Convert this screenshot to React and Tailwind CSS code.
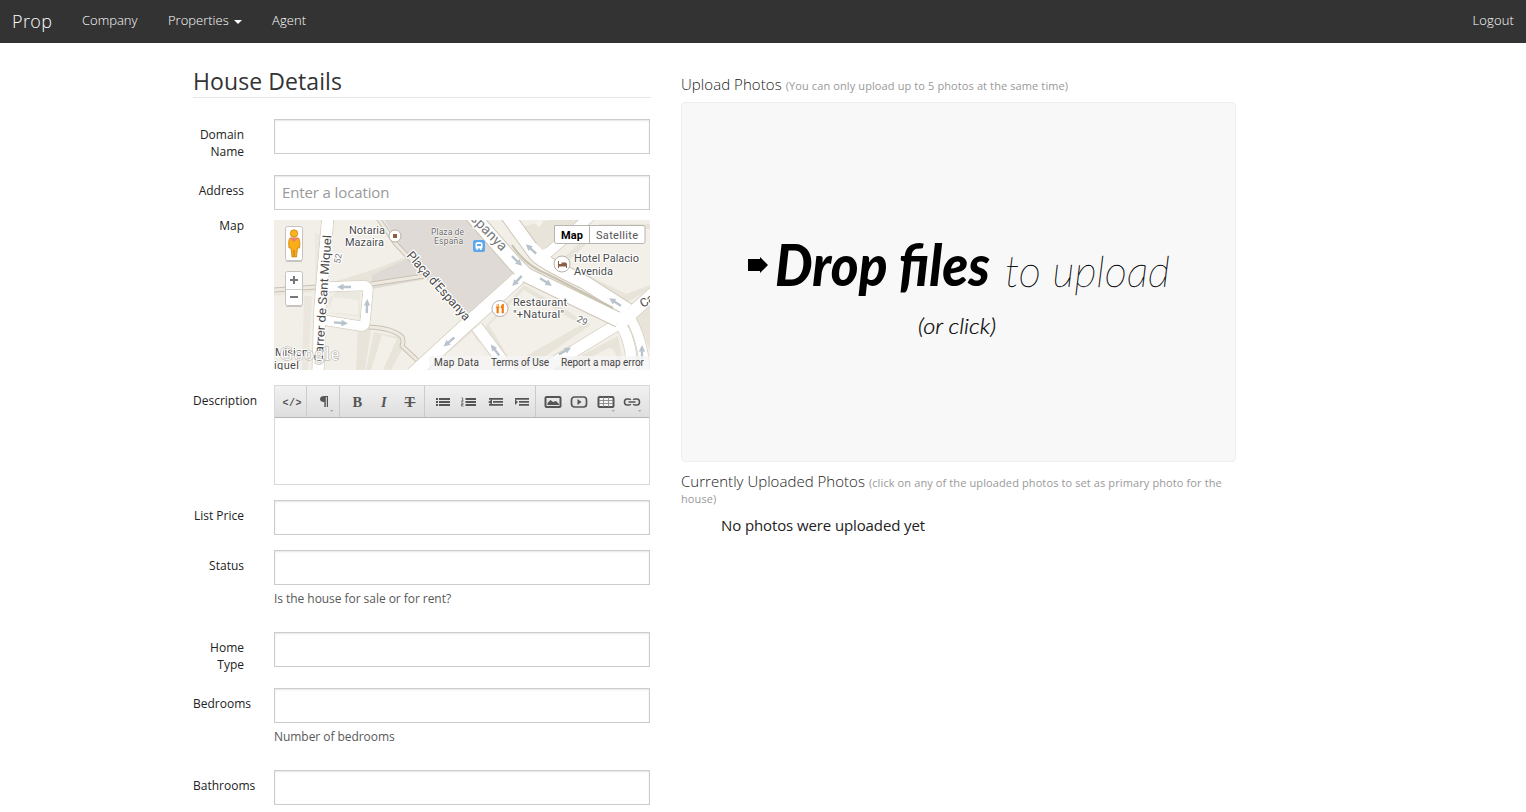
import React from "react";

const MAP_ARROWS = [
  [70, 67, 180], [67, 103, 5], [93, 86, -88], [175, 122, 140],
  [257, 29, 222], [243, 41, 44], [243, 61, 133], [272, 62, 32],
  [341, 82, 212], [221, 130, 232], [291, 131, -30], [368, 132, -90],
];

function Road({ d, w, casing = "#d9d4c6" }) {
  return (
    <>
      <path d={d} stroke={casing} strokeWidth={w + 2} />
      <path d={d} stroke="#fff" strokeWidth={w} />
    </>
  );
}

function MapDrawing() {
  const roads = [
    ["M54 -4 L46 88 L44 154", 11],
    ["M51 67 L90 65.500 Q94 65.500 94 70 L91 102 Q91 107 86 106 L49 100", 9],
    ["M318 -5 L268 38", 9],
    ["M249 54 L190 107 L139 154", 13],
    ["M203 107 L238 154", 11],
    ["M349 101 L300 131 L260 154", 11],
    ["M349 101 L380 73", 12],
    ["M340 98 Q358 112 358 154", 10],
    ["M354 94 Q370 120 371 154", 9],
  ];
  return (
    <svg viewBox="0 0 376 150" className="block h-[150px] w-[376px]" fontFamily="Roboto, sans-serif">
      <rect width="376" height="150" fill="#f2efe9" />
      <g fill="#e8e4da">
        <path d="M60 62 L98 50 L132 37 L137 42 L98 64 Z" />
        <path d="M41 13 H46 V70 H41 Z" opacity=".6" />
        <path d="M54 80 L62 72 H86 V97 L57 93 Z" fill="#ebe8df" />
        <path d="M0 70 L40 65 V72 L0 76 Z M30 76 H38 L34 150 H28 Z" opacity=".7" />
        <path d="M84 108 L97 110 L91 150 H82 Z M100 112 L125 117 L129 127 L117 150 H92 Z" />
        <path d="M143 150 L198 101 L208 116 L190 150 Z M211 107 L250 65 L317 105 L270 137 L242 150 Z" />
        <path d="M275 0 L310 0 L269 30 L247 7 Z M282 45 L326 4 H376 V69 L352 83 Z" />
        <path d="M280 150 L344 116 L350 150 Z M376 85 L361 98 L376 130 Z" />
      </g>
      <g fill="#f3f0ea">
        <path d="M59 77 L84 80 V95 L55 92 Z M108 115 L123 119 L109 150 H97 Z" />
        <path d="M153 150 L198 112 L220 150 Z" />
        <path d="M215 105 L250 70 L307 105 L261 131 L239 145 Z M291 44 L328 9 H376 V65 L352 74 Z" />
        <path d="M293 150 L335 128 Q344 129 344 150 Z" />
      </g>
      <path d="M110 0 L134 38 L98 55 L98 69 L152 59 L197 97 L246 53 L201 0 Z" fill="#dfdad5" />
      <g fill="none" strokeLinejoin="round">
        <path d="M0 70 L42 67 M97 64 L150 56 M104 -2 L122 24 L140 43 M94 107 Q119 108 128 117 Q130 121 128 126 L143 140" stroke="#c9c2b3" strokeWidth="5" />
        <path d="M0 70 L42 67 M97 64 L150 56 M104 -2 L122 24 L140 43 M94 107 Q119 108 128 117 Q130 121 128 126 L143 140" stroke="#eeeae1" strokeWidth="3" />
        {roads.map(([d, w]) => <Road key={d} d={d} w={w} />)}
        {roads.map(([d, w]) => <path key={d} d={d} stroke="#fff" strokeWidth={w} />)}
        <Road d="M233 -5 L262 35 Q270 43 310 62 L354 90" w={13} casing="#cec8b7" />
        <Road d="M198 -5 L240 43 L252 55 L345 100" w={14} casing="#cec8b7" />
        <path d="M238 25 Q252 46 273 54 L339 88" stroke="#c9c2b0" strokeWidth="2.200" />
        <path d="M249 54 L239 63 M343 103 L352 94 M346 100 L356 91 M258 27 L267 37 L275 33" stroke="#fff" strokeWidth="11" />
      </g>
      {MAP_ARROWS.map(([x, y, a]) => (
        <path key={`${x}-${y}`} transform={`translate(${x} ${y}) rotate(${a})`} d="M-7 -1.200 H.5 V-3.200 L7 0 L.5 3.200 V1.200 H-7 Z" fill="#b9c3cc" />
      ))}
      <path d="m265 -1 4 4-4 4-4-4z" fill="#f4f2ec" />
      <g fill="#4a4a4a" stroke="#fff" strokeWidth="2.500" strokeLinejoin="round" paintOrder="stroke" fontSize="11">
        <text transform="translate(48.500 142) rotate(-86)" fontSize="12" textLength="127" lengthAdjust="spacingAndGlyphs">Carrer de Sant Miquel</text>
        <text transform="translate(66 44) rotate(-80)" fontSize="9" fill="#777">52</text>
        <text transform="translate(132 36) rotate(48)" fontSize="12.500" textLength="88" lengthAdjust="spacingAndGlyphs">Plaça d'Espanya</text>
        <text transform="translate(190 -7) rotate(46)" fontSize="14" fill="#777" textLength="54">Espanya</text>
        <text transform="translate(302 101) rotate(27)" fontSize="9.500" fill="#666">29</text>
        <text transform="translate(369 88) rotate(-32)" fontSize="12">Ca</text>
        <g strokeWidth="2">
          <text x="75" y="14" textLength="36">Notaria</text>
          <text x="71" y="26" textLength="39">Mazaira</text>
          <text x="157" y="15" fontSize="8.500" textLength="33" fill="#666" strokeWidth="1">Plaza de</text>
          <text x="160" y="24" fontSize="8.500" textLength="29" fill="#666" strokeWidth="1">España</text>
          <text x="300" y="42" textLength="65">Hotel Palacio</text>
          <text x="300" y="55" textLength="39">Avenida</text>
          <text x="239" y="86" textLength="54">Restaurant</text>
          <text x="239" y="98" textLength="51">"+Natural"</text>
          <text x="1" y="136" textLength="33">Mision</text>
          <text x="0" y="149" textLength="25">iquel</text>
        </g>
      </g>
      <g fill="#fff" stroke="#b6b1a9">
        <circle cx="121" cy="16" r="6" /><circle cx="288" cy="44" r="8" /><circle cx="226" cy="88.500" r="8" />
      </g>
      <rect x="119" y="14" width="4" height="4" fill="#8b6045" />
      <path d="M284 41h1v3h2.500v-1.500H292l1 1.500v4h-1v-1.500h-7V48h-1z" fill="#8b6045" />
      <path d="M223 84v3.500M224.500 84v3.500M222.200 87h3l-.8 1.500V93h-1.500v-4.500zM229 84q-2 1-2 4h1v5h1.500v-9z" stroke="#f27b0c" strokeWidth=".7" fill="#f27b0c" />
      <g>
        <rect x="199" y="20" width="12" height="12" rx="2" fill="#5ba7ee" />
        <path d="M201.500 23.500q0-1.500 3.500-1.500t3.500 1.500v5h-1v1.500H206v-1.500h-2V30h-1.500v-1.500h-1z" fill="#fff" />
        <path d="M203 24h4v2h-4z" fill="#5ba7ee" />
      </g>
      <g>
        <rect x="11.500" y="6.500" width="17" height="34" rx="2" fill="#fff" stroke="#c6c3be" />
        <path d="M12 41.500h16" stroke="#aaa" opacity=".6" />
        <path d="M16 18q-2 2-1 10h2l1 9h1.800l.2-7 .5 7h2l1-9h2q1-8-1-10z" fill="#f9ae15" stroke="#c8820c" strokeWidth=".8" />
        <circle cx="20" cy="13.500" r="3.700" fill="#f9b51f" stroke="#c8820c" strokeWidth=".8" />
        <path d="M16 18h8l-4 4z" fill="#f5787b" />
        <rect x="11.500" y="51.500" width="17" height="34" rx="2" fill="#fff" stroke="#c6c3be" />
        <path d="M12 86.500h16" stroke="#aaa" opacity=".6" />
        <path d="M12 69.500h16" stroke="#d2d0cc" />
        <path d="M16 60h8M20 56v8M16 77h8" stroke="#777" strokeWidth="2" />
      </g>
      <text x="6" y="140" fontSize="18" fontFamily="Liberation Serif, serif" fill="#fff" stroke="#b5b2ac" strokeWidth="1.200" paintOrder="stroke" textLength="59">Google</text>
      <rect x="155" y="136" width="221" height="14" fill="#f5f5f5" opacity=".78" />
      <g fill="#444" fontSize="10">
        <text x="160" y="146" textLength="45">Map Data</text>
        <text x="217" y="146" textLength="58">Terms of Use</text>
        <text x="287" y="146" textLength="83">Report a map error</text>
      </g>
      <path d="M280.500 5.500H369q2 0 2 2V21.500q0 2-2 2h-86.500q-2 0-2-2z" fill="#fff" stroke="#b8b5b1" />
      <path d="M315.500 5v19" stroke="#b8b5b1" />
      <text x="287" y="19" fontSize="11" fontWeight="700" fill="#000" textLength="22">Map</text>
      <text x="322" y="19" fontSize="11" fill="#565656" textLength="42">Satellite</text>
    </svg>
  );
}

const ICONS = {
  code: <text x="2.500" y="14" fontSize="10" fontWeight="700" fontFamily="Liberation Mono, monospace" textLength="19">&lt;/&gt;</text>,
  para: <><path d="M12.500 4H16v11h-1.200V5h-1v10h-1.500v-5Q8 10 8 7t4.500-3z" /><path d="M18 18h3.500l-1.750 2z" fill="#aaa" /></>,
  bold: <text x="7.500" y="15" fontSize="14.500" fontWeight="700" fontFamily="Liberation Serif, serif">B</text>,
  italic: <text x="10" y="15" fontSize="14.500" fontWeight="700" fontStyle="italic" fontFamily="Liberation Serif, serif">I</text>,
  strike: <><text x="7" y="15" fontSize="14.500" fontWeight="700" fontFamily="Liberation Serif, serif">T</text><path d="M6.500 10h11v1.200h-11z" /></>,
  ul: <><path d="M5 6h2v2H5zM5 9h2v2H5zM5 12h2v2H5z" /><path d="M8 6h11v2H8zM8 9h11v2H8zM8 12h11v2H8z" /></>,
  ol: <><path d="M8.500 6H19v2H8.500zM8.500 9H19v2H8.500zM8.500 12H19v2H8.500z" /><path d="M4.500 6h1.200v3M4 9.200h2.500M4 11h2v1.400H4.500V14h2" fill="none" stroke="#555" strokeWidth=".8" /></>,
  outdent: <path d="M5 6h14v1.700H5zM9 9h10v1.700H9zM5 12h14v1.700H5zM8 7.500v5L4 10z" />,
  indent: <path d="M5 6h14v1.700H5zM9 9h10v1.700H9zM9 12h10v1.700H9zM5 7.500v5.500L8 10z" />,
  image: <><rect x="4.500" y="5" width="15" height="10" rx="1" fill="none" stroke="#555" strokeWidth="2" /><path d="M6.500 13v-2l3-3 2.500 2 3-1 3 3v1z" /></>,
  video: <><rect x="4.500" y="5" width="15" height="10" rx="3" fill="none" stroke="#555" strokeWidth="1.700" /><path d="M10.500 7v6l4-3z" /></>,
  table: <><rect x="4.500" y="5" width="15" height="10" rx="1" fill="#f4f4f4" stroke="#555" strokeWidth="2" /><path d="M9.500 5v10M14.500 5v10M5 8.500h14M5 11.500h14" stroke="#888" strokeWidth=".9" /><path d="M17.500 18H21l-1.750 2z" fill="#aaa" /></>,
  link: <><path d="M10.500 8Q10.500 7 9 7H7Q4.500 7 4.500 10T7 13h2q1.500 0 1.500-1M13.500 8q0-1 1.500-1h2q2.500 0 2.500 3T17 13h-2q-1.500 0-1.500-1M8.500 10h7" fill="none" stroke="#555" strokeWidth="1.600" /><path d="M18 18h3.500l-1.750 2z" fill="#aaa" /></>,
};

function ToolIcon({ name }) {
  return (
    <span className="flex w-[26.400px] items-center justify-center">
      <svg viewBox="0 0 24 22" className="mt-0.5 h-[22px] w-6 shrink-0" fill="#555">{ICONS[name]}</svg>
    </span>
  );
}

const TOOL_GROUPS = [
  ["w-8 pl-[3px]", ["code"]],
  ["w-[33px] pl-[2px]", ["para"]],
  ["w-[85px] pl-[3px]", ["bold", "italic", "strike"]],
  ["w-[111px] pl-[5px]", ["ul", "ol", "outdent", "indent"]],
  ["flex-1", ["image", "video", "table", "link"]],
];

function Editor() {
  return (
    <div className="h-[100px] border border-[#d9d9d9]">
      <div className="flex h-8 border-b border-[#b5b5b5] bg-linear-to-b from-[#f1f1f1] to-[#dedede]">
        {TOOL_GROUPS.map(([cls, icons], i) => (
          <div key={i} className={`flex justify-center border-r border-[#cbcbcb] last:border-r-0 ${cls}`}>
            {icons.map((n) => <ToolIcon key={n} name={n} />)}
          </div>
        ))}
      </div>
    </div>
  );
}

function Row({ label, help, className, labelClass = "pt-[7px]", children }) {
  return (
    <div className={`flex ${className}`}>
      <label className={`mr-[30px] w-[51px] shrink-0 text-right text-xs leading-[17px] text-[#222] ${labelClass}`}>{label}</label>
      <div className="w-[376px]">
        {children || <input className="block h-[35px] w-full border border-[#ccc] px-[7px] text-[15px] shadow-[inset_0_1px_2px_rgba(0,0,0,0.1)]" />}
        {help && <p className="mt-[5px] text-xs leading-[17px] tracking-[-0.05px] text-[#595959]">{help}</p>}
      </div>
    </div>
  );
}

function DropMessage() {
  return (
    <svg viewBox="0 0 430 110" className="h-[110px] w-[430px]" fontFamily="Lato, sans-serif">
      <path d="M4 23h12v-2l8 8-8 8v-2H4z" />
      <text x="31" y="50" fontSize="57" fontWeight="900" fontStyle="italic" textLength="215" lengthAdjust="spacingAndGlyphs">Drop files</text>
      <text x="261" y="50.500" fontSize="43" fontWeight="100" fontStyle="italic" stroke="#000" strokeWidth=".35" textLength="165" lengthAdjust="spacingAndGlyphs">to upload</text>
      <text x="174" y="98" fontSize="21" fontWeight="300" fontStyle="italic" stroke="#000" strokeWidth=".2" textLength="78" lengthAdjust="spacingAndGlyphs">(or click)</text>
    </svg>
  );
}

export default function App() {
  return (
    <div className="h-[812px] w-[1526px] overflow-hidden bg-white font-['Open_Sans',sans-serif] text-[#222]">
      <nav className="flex h-[43px] items-center bg-[#333] px-3 pb-0.5 text-[13px] font-light text-white">
        <a className="w-[70px] text-lg tracking-[0.4px]">Prop</a>
        <a className="w-[86px]">Company</a>
        <a className="flex w-[104px] items-center">Properties
          <svg viewBox="0 0 8 4" className="mt-[3px] ml-[5px] h-1 w-2" fill="#fff"><path d="M0 0h8L4 4z" /></svg>
        </a>
        <a className="tracking-[0.1px]">Agent</a>
        <a className="ml-auto tracking-[0.15px]">Logout</a>
      </nav>
      <main className="flex pl-[193px]">
        <form className="w-[458px]">
          <h1 className="mt-[22px] h-[33px] border-b border-[#e5e5e5] text-[23px] leading-[33px] tracking-[0.08px] text-[#333]">House Details</h1>
          <Row label="Domain Name" className="mt-[21px] h-14" />
          <Row label="Address" className="h-[45px]">
            <input placeholder="Enter a location" className="block h-[35px] w-full border border-[#ccc] px-[7px] pb-px text-[15px] tracking-[-0.12px] shadow-[inset_0_1px_2px_rgba(0,0,0,0.1)] placeholder:text-[#999]" />
          </Row>
          <Row label="Map" className="h-[165px]" labelClass="-mt-[3px]"><MapDrawing /></Row>
          <Row label="Description" className="h-[115px]"><Editor /></Row>
          <Row label="List Price" className="h-[50px]" />
          <Row label="Status" help="Is the house for sale or for rent?" className="h-[82px]" />
          <Row label="Home Type" className="h-14" />
          <Row label="Bedrooms" help="Number of bedrooms" className="h-[82px]" />
          <Row label="Bathrooms" className="h-[35px]" />
        </form>
        <section className="ml-[30px] w-[555px]">
          <h2 className="mt-[31px] h-7 text-[15px] leading-[21px] font-light tracking-[0.06px] text-[#222]">
            Upload Photos <small className="text-[11px] font-normal tracking-[0.11px] text-[#999]">(You can only upload up to 5 photos at the same time)</small>
          </h2>
          <div className="flex h-[360px] justify-center rounded border border-[#eee] bg-[#f8f8f8] pt-[133px]"><DropMessage /></div>
          <h2 className="mt-[11px] text-[15px] leading-4 font-light tracking-[0.03px] text-[#222]">
            Currently Uploaded Photos <small className="text-[11px] leading-none font-normal tracking-[0.11px] text-[#999]">(click on any of the uploaded photos to set as primary photo for the house)</small>
          </h2>
          <p className="mt-[9px] ml-10 text-[15px] leading-[22px] tracking-[-0.11px]">No photos were uploaded yet</p>
        </section>
      </main>
    </div>
  );
}
